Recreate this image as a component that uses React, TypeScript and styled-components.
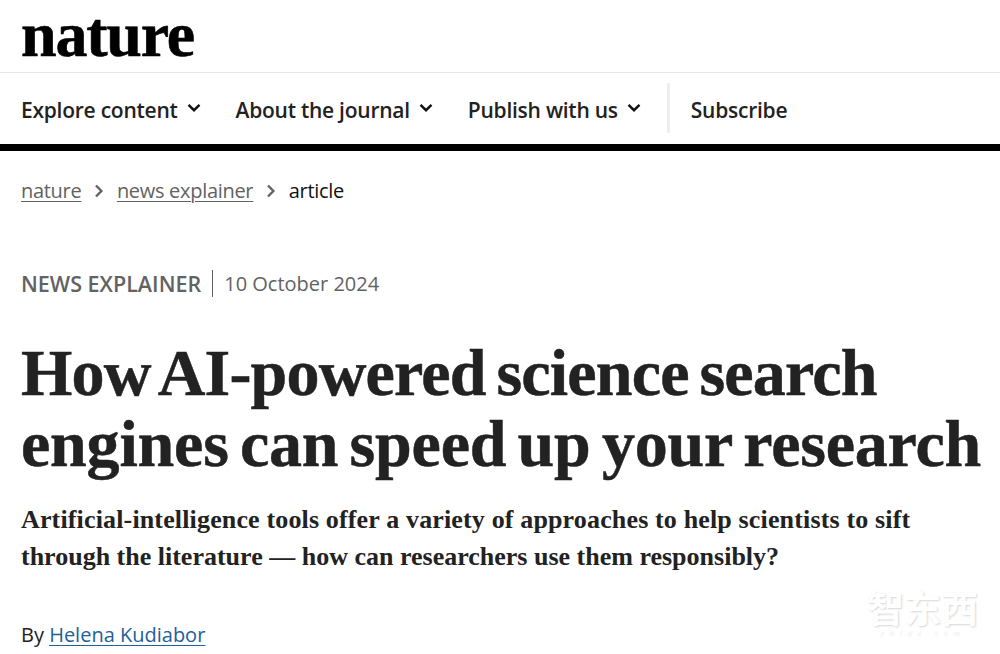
import React from 'react'
import styled, { createGlobalStyle } from 'styled-components'

const Global = createGlobalStyle`
  html, body { margin: 0; padding: 0; background: #fff; }
  body { font-family: "Open Sans", "Noto Sans", sans-serif; height: 654px; overflow: hidden; }
`

const Page = styled.div`
  position: relative;
  width: 1000px;
  height: 654px;
  overflow: hidden;
`
const LogoBar = styled.header`
  height: 72px;
  padding-left: 21px;
  border-bottom: 1px solid #e6e6e6;
`
const Logo = styled.div`
  font-family: "Liberation Serif", serif;
  font-weight: 700;
  font-size: 64px;
  line-height: 70px;
  letter-spacing: -1.2px;
  -webkit-text-stroke: 0.6px #000;
  color: #000;
`
const Nav = styled.nav`
  display: flex;
  align-items: center;
  padding: 2px 0 0 21px;
  box-sizing: border-box;
  height: 78px;
  border-bottom: 7px solid #000;
`
const NavItem = styled.a`
  display: flex;
  align-items: center;
  gap: 9px;
  margin-right: 35px;
  font-size: 21px;
  font-weight: 600;
  letter-spacing: -0.25px;
  color: #222;
  white-space: nowrap;
`
const NavDivider = styled.span`
  width: 3px;
  height: 50px;
  background: #eee;
  margin: -3px 21px 0 -9px;
`
const ChevronIcon = styled.svg`
  margin-bottom: 3px;
`
const Breadcrumbs = styled.ol`
  display: flex;
  align-items: center;
  list-style: none;
  margin: 0;
  padding: 25px 0 0 21px;
  height: 28px;
  font-size: 20px;
`
const Crumb = styled.li<{ $current?: boolean }>`
  color: ${p => (p.$current ? '#111' : '#626262')};
  text-decoration: ${p => (p.$current ? 'none' : 'underline')};
  text-underline-offset: 3px;
  text-decoration-thickness: 1px;
  letter-spacing: -0.3px;
`
const CrumbArrow = styled.li`
  display: flex;
  margin: 2px 13px 0 12.5px;
`
const Article = styled.article`
  padding: 65px 0 0 21px;
`
const Meta = styled.div`
  display: flex;
  align-items: center;
  height: 28px;
  font-size: 20px;
  color: #626262;
`
const Kind = styled.span`
  font-size: 21.5px;
  font-weight: 600;
  padding-right: 11px;
  border-right: 1px solid #626262;
  line-height: 27px;
`
const MetaDate = styled.time`
  padding-left: 11px;
`
const Title = styled.h1`
  margin: 40px 0 0;
  font-family: "Liberation Serif", serif;
  font-size: 66px;
  line-height: 71px;
  font-weight: 700;
  word-spacing: -5px;
  -webkit-text-stroke: 0.5px #222;
  color: #222;
  white-space: nowrap;
`
const TitleLine = styled.span<{ $tracking: number }>`
  display: block;
  letter-spacing: ${p => p.$tracking}px;
`
const Standfirst = styled.p`
  margin: 22px 0 0;
  font-family: "Liberation Serif", serif;
  font-size: 26px;
  line-height: 37px;
  font-weight: 700;
  color: #222;
  white-space: nowrap;
`
const StandfirstLine = styled.span<{ $tracking: number }>`
  display: block;
  letter-spacing: ${p => p.$tracking}px;
`
const Byline = styled.p`
  margin: 46px 0 0;
  font-size: 20px;
  color: #222;
  white-space: nowrap;
`
const Author = styled.a`
  color: #22609a;
  text-decoration: underline;
  text-underline-offset: 3px;
  text-decoration-thickness: 1px;
`
const Watermark = styled.div`
  position: absolute;
  right: 22px;
  bottom: 16px;
  display: flex;
  flex-direction: column;
  align-items: center;
  color: #fff;
  text-shadow: 1px 1px 2px rgba(0, 0, 0, 0.16);
`
const WatermarkName = styled.span`
  font-family: "Noto Sans CJK SC", sans-serif;
  font-weight: 700;
  font-size: 37px;
  line-height: 42px;
`
const WatermarkUrl = styled.span`
  font-size: 7px;
  line-height: 10px;
  letter-spacing: 6px;
  font-style: italic;
`

const Chevron = () => (
  <ChevronIcon width="14" height="10" viewBox="0 0 14 10" fill="none" stroke="#111" strokeWidth="2.4">
    <path d="M1.5 1.8 7 7.2l5.5-5.4" />
  </ChevronIcon>
)

const Arrow = () => (
  <svg width="10" height="14" viewBox="0 0 10 14" fill="none" stroke="#626262" strokeWidth="2.4">
    <path d="M2 1.5 7.4 7 2 12.5" />
  </svg>
)

const App: React.FC = () => {
  return (
    <Page>
      <Global />
      <LogoBar>
        <Logo>nature</Logo>
      </LogoBar>
      <Nav>
        <NavItem>Explore content <Chevron /></NavItem>
        <NavItem>About the journal <Chevron /></NavItem>
        <NavItem>Publish with us <Chevron /></NavItem>
        <NavDivider />
        <NavItem>Subscribe</NavItem>
      </Nav>
      <Breadcrumbs>
        <Crumb>nature</Crumb>
        <CrumbArrow><Arrow /></CrumbArrow>
        <Crumb>news explainer</Crumb>
        <CrumbArrow><Arrow /></CrumbArrow>
        <Crumb $current>article</Crumb>
      </Breadcrumbs>
      <Article>
        <Meta>
          <Kind>NEWS EXPLAINER</Kind>
          <MetaDate>10 October 2024</MetaDate>
        </Meta>
        <Title>
          <TitleLine $tracking={-0.8}>How AI-powered science search</TitleLine>
          <TitleLine $tracking={-0.2}>engines can speed up your research</TitleLine>
        </Title>
        <Standfirst>
          <StandfirstLine $tracking={0.15}>Artificial-intelligence tools offer a variety of approaches to help scientists to sift</StandfirstLine>
          <StandfirstLine $tracking={0}>through the literature — how can researchers use them responsibly?</StandfirstLine>
        </Standfirst>
        <Byline>By <Author>Helena Kudiabor</Author></Byline>
      </Article>
      <Watermark>
        <WatermarkName>智东西</WatermarkName>
        <WatermarkUrl>zhidx.com</WatermarkUrl>
      </Watermark>
    </Page>
  )
}

export default App
